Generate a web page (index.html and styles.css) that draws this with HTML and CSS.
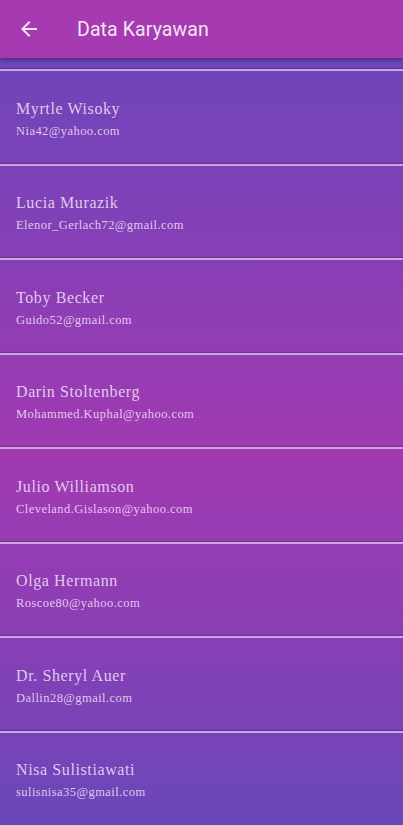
FILE: index.html
```html
<!DOCTYPE html>
<html>
<head>
<meta charset="utf-8">
<link rel="stylesheet" href="styles.css">
</head>
<body>
<header class="appbar">
  <svg class="back" viewBox="0 0 24 24" width="24" height="24"><path d="M20 11H7.83l5.59-5.59L12 4l-8 8 8 8 1.41-1.41L7.83 13H20v-2z" fill="#f3e4f5"/></svg>
  <h1 class="title">Data Karyawan</h1>
</header>
<main class="list">
  <div class="item"><div class="name">Myrtle Wisoky</div><div class="email">Nia42@yahoo.com</div></div>
  <div class="item"><div class="name">Lucia Murazik</div><div class="email">Elenor_Gerlach72@gmail.com</div></div>
  <div class="item"><div class="name">Toby Becker</div><div class="email">Guido52@gmail.com</div></div>
  <div class="item"><div class="name">Darin Stoltenberg</div><div class="email">Mohammed.Kuphal@yahoo.com</div></div>
  <div class="item"><div class="name">Julio Williamson</div><div class="email">Cleveland.Gislason@yahoo.com</div></div>
  <div class="item"><div class="name">Olga Hermann</div><div class="email">Roscoe80@yahoo.com</div></div>
  <div class="item"><div class="name">Dr. Sheryl Auer</div><div class="email">Dallin28@gmail.com</div></div>
  <div class="item"><div class="name">Nisa Sulistiawati</div><div class="email">sulisnisa35@gmail.com</div></div>
</main>
</body>
</html>
```
FILE: styles.css
```css
html, body {
  margin: 0;
  padding: 0;
}
body {
  width: 403px;
  height: 825px;
  overflow: hidden;
  background: linear-gradient(180deg, #6747b8 0%, #7b42b8 20%, #a13ab1 55%, #8c3eb5 75%, #6848b9 100%);
}
.appbar {
  height: 58px;
  background: #a53ab1;
  display: flex;
  align-items: center;
  padding-left: 17px;
  box-shadow: 0 2px 4px rgba(40, 10, 60, 0.45);
  position: relative;
  z-index: 1;
}
.back {
  width: 24px;
  height: 24px;
}
.title {
  margin: 0 0 0 36px;
  font-family: Roboto, "Liberation Sans", sans-serif;
  font-weight: 400;
  font-size: 19.5px;
  color: #f3e4f5;
  letter-spacing: 0.1px;
}
.list {
  padding-top: 11px;
}
.item {
  height: 92.5px;
  box-sizing: content-box;
  border-top: 2px solid rgba(225, 200, 240, 0.75);
  box-shadow: 0 -1px 1px rgba(40, 10, 60, 0.25);
  display: flex;
  flex-direction: column;
  justify-content: center;
  padding-left: 16px;
  color: rgba(236, 220, 245, 0.9);
  font-family: "Liberation Serif", "DejaVu Serif", serif;
}
.name {
  font-size: 16px;
  letter-spacing: 0.6px;
  line-height: 20px;
  margin-top: 3px;
}
.email {
  font-size: 12.5px;
  letter-spacing: 0.45px;
  line-height: 16px;
  margin-top: 4px;
}
```
